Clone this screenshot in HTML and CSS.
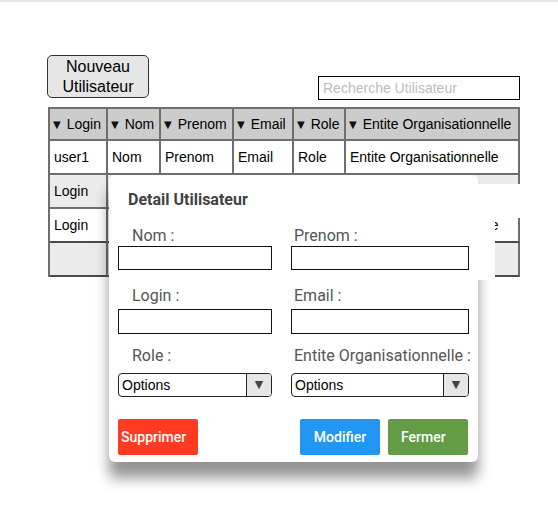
FILE: index.html
```html
<!DOCTYPE html>
<html lang="fr">
<head>
<meta charset="utf-8">
<title>Utilisateurs</title>
<link rel="stylesheet" href="styles.css">
</head>
<body>
<div class="topbar"></div>
<main class="page">
  <div class="toolbar">
    <button class="btn-new" type="button">Nouveau<br>Utilisateur</button>
    <input class="search" type="text" placeholder="Recherche Utilisateur">
  </div>
  <div class="grid">
    <div class="cell head"><span class="sort">▼</span>Login</div>
    <div class="cell head"><span class="sort">▼</span>Nom</div>
    <div class="cell head"><span class="sort">▼</span>Prenom</div>
    <div class="cell head"><span class="sort">▼</span>Email</div>
    <div class="cell head"><span class="sort">▼</span>Role</div>
    <div class="cell head"><span class="sort">▼</span>Entite Organisationnelle</div>

    <div class="cell">user1</div>
    <div class="cell">Nom</div>
    <div class="cell">Prenom</div>
    <div class="cell">Email</div>
    <div class="cell">Role</div>
    <div class="cell">Entite Organisationnelle</div>

    <div class="cell alt">Login</div>
    <div class="cell alt">Nom</div>
    <div class="cell alt">Prenom</div>
    <div class="cell alt">Email</div>
    <div class="cell alt">Role</div>
    <div class="cell alt">Entite Organisationnelle</div>

    <div class="cell dark-bottom">Login</div>
    <div class="cell dark-bottom">Nom</div>
    <div class="cell dark-bottom">Prenom</div>
    <div class="cell dark-bottom">Email</div>
    <div class="cell dark-bottom">Role</div>
    <div class="cell dark-bottom">Entite Organisationnelle</div>

    <div class="cell alt dark-bottom"></div>
    <div class="cell alt dark-bottom"></div>
    <div class="cell alt dark-bottom"></div>
    <div class="cell alt dark-bottom"></div>
    <div class="cell alt dark-bottom"></div>
    <div class="cell alt dark-bottom"></div>
  </div>
</main>

<section class="modal">
  <h2 class="modal-title">Detail Utilisateur</h2>
  <div class="form-row first">
    <div class="field left"><label>Nom :</label><div class="input"></div></div>
    <div class="field right"><label>Prenom :</label><div class="input"></div></div>
  </div>
  <div class="form-row">
    <div class="field left"><label>Login :</label><div class="input tall"></div></div>
    <div class="field right"><label>Email :</label><div class="input tall"></div></div>
  </div>
  <div class="form-row selects">
    <div class="field left"><label>Role :</label>
      <div class="select"><span class="select-text">Options</span><span class="select-arrow">▼</span></div>
    </div>
    <div class="field right"><label>Entite Organisationnelle :</label>
      <div class="select"><span class="select-text">Options</span><span class="select-arrow">▼</span></div>
    </div>
  </div>
  <div class="actions">
    <button class="act del" type="button">Supprimer</button>
    <button class="act mod" type="button">Modifier</button>
    <button class="act close" type="button">Fermer</button>
  </div>
</section>
<div class="mask mask-a"></div>
<div class="mask mask-b"></div>
</body>
</html>
```

FILE: styles.css
```css
html, body {
  margin: 0;
  padding: 0;
  background: #ffffff;
}
body {
  width: 558px;
  height: 508px;
  position: relative;
  overflow: hidden;
  font-family: "Liberation Sans", Arial, sans-serif;
  color: #000;
}
.topbar {
  height: 2px;
  background: #e4e4e4;
}
.page {
  padding-left: 48px;
}
.toolbar {
  width: 472px;
  margin-top: 53px;
  display: flex;
  justify-content: space-between;
  align-items: flex-end;
}
.btn-new {
  margin-left: -1px;
  margin-bottom: 2px;
  width: 102px;
  height: 43px;
  padding: 0;
  background: #e6e6e6;
  border: 1px solid #333;
  border-radius: 5px;
  font-family: "Liberation Sans", Arial, sans-serif;
  font-size: 16px;
  line-height: 20px;
  color: #000;
}
.search {
  box-sizing: border-box;
  width: 202px;
  height: 24px;
  margin: 0;
  border: 1px solid #000;
  padding: 0 4px;
  font-family: "Liberation Sans", Arial, sans-serif;
  font-size: 14px;
  outline: none;
}
.search::placeholder {
  color: #bdbdbd;
}
.grid {
  margin-top: 7px;
  width: 472px;
  box-sizing: border-box;
  display: grid;
  grid-template-columns: 58px 53px 73px 60px 52px 174px;
  grid-template-rows: 32px 34px 34px 34px 34px;
  border-left: 2px solid #6e6e6e;
  border-top: 2px solid #6e6e6e;
  background: #fff;
}
.cell {
  box-sizing: border-box;
  border-right: 2px solid #6e6e6e;
  border-bottom: 2px solid #6e6e6e;
  padding-left: 4px;
  display: flex;
  align-items: center;
  font-size: 14px;
  white-space: nowrap;
  overflow: hidden;
}
.cell.head {
  background: #cccccc;
  padding-left: 3px;
}
.sort {
  font-family: "DejaVu Sans", sans-serif;
  font-size: 10px;
  margin-right: 6px;
  color: #111;
}
.cell.alt {
  background: #ebebeb;
}
.cell.dark-bottom {
  border-bottom-color: #4a4a4a;
}

/* modal overlay */
.modal {
  position: absolute;
  left: 109px;
  top: 175px;
  width: 369px;
  height: 287px;
  box-sizing: border-box;
  padding: 15px 9px 0 9px;
  background: #fff;
  border-radius: 6px;
  box-shadow: 0 16px 14px rgba(0, 0, 0, 0.42);
  font-family: Roboto, "Noto Sans", sans-serif;
  z-index: 2;
}
.modal-title {
  margin: 0 0 0 10px;
  font-size: 16px;
  line-height: 20px;
  font-weight: 700;
  color: #424242;
}
.form-row {
  display: grid;
  grid-template-columns: 154px 178px;
  column-gap: 19px;
  margin-top: 16px;
}
.form-row.selects {
  margin-top: 12px;
}
.field {
  display: flex;
  flex-direction: column;
}
.field label {
  display: block;
  font-size: 16px;
  line-height: 20px;
  color: #555;
  margin-bottom: 3px;
  white-space: nowrap;
}
.form-row.first .field label {
  margin-bottom: 0;
}
.form-row.selects .field label {
  margin-bottom: 7px;
}
.field.left label {
  padding-left: 14px;
}
.field.right label {
  padding-left: 3px;
}
.input {
  box-sizing: border-box;
  height: 24px;
  border: 1px solid #111;
  background: #fff;
}
.input.tall {
  height: 25px;
}
.select {
  box-sizing: border-box;
  height: 24px;
  border: 1px solid #222;
  border-radius: 4px;
  display: flex;
  overflow: hidden;
  font-family: "Liberation Sans", Arial, sans-serif;
}
.select-text {
  flex: 1;
  padding-left: 3px;
  font-size: 14px;
  line-height: 22px;
  color: #000;
}
.select-arrow {
  width: 24px;
  background: #e6e6e6;
  border-left: 1px solid #222;
  font-family: "DejaVu Sans", sans-serif;
  font-size: 11px;
  line-height: 22px;
  text-align: center;
  color: #444;
}
.actions {
  display: flex;
  margin-top: 22px;
  padding-right: 1px;
  gap: 8px;
}
.act {
  width: 80px;
  height: 36px;
  border: none;
  border-radius: 2px;
  padding: 0;
  font-family: Roboto, "Noto Sans", sans-serif;
  font-size: 14px;
  font-weight: 500;
  color: #fff;
}
.act.del {
  background: #ff3b22;
  text-align: left;
  padding-left: 3px;
  margin-right: auto;
}
.act.mod {
  background: #2196f3;
}
.act.close {
  background: #629c44;
  text-align: left;
  padding-left: 13px;
}
.mask {
  position: absolute;
  background: #fff;
  z-index: 3;
}
.mask-a {
  left: 478px;
  top: 184px;
  width: 80px;
  height: 34px;
}
.mask-b {
  left: 478px;
  top: 218px;
  width: 17px;
  height: 62px;
}
```
